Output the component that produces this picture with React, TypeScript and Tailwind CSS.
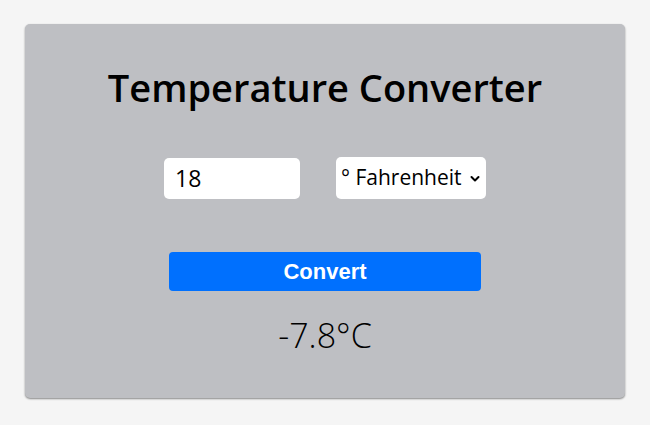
import React, {useState} from "react";

export default function App() {
    const [value, setValue] = useState<string>("18");
    const [unit, setUnit] = useState<string>("F");

    return (
        <div className="min-h-[425px] w-full bg-[#f5f5f5] pt-[24px] px-[25px] font-['Open_Sans',sans-serif]">
            <div className="w-[600px] h-[374px] bg-[#bebfc3] rounded-[5px] shadow-[0_1px_2px_rgba(0,0,0,0.45)] flex flex-col items-center pt-[38px]">
                <h1 className="text-[38px] font-semibold text-black leading-[50px]">Temperature Converter</h1>
                <div className="flex flex-row items-center gap-[36px] mt-[45px]">
                    <input
                        type="text"
                        value={value}
                        onChange={e => setValue(e.target.value)}
                        className="w-[136px] h-[41px] bg-white rounded-[5px] px-[11px] text-[23px] text-black outline-none"
                    />
                    <div className="relative w-[150px] h-[42px] bg-white rounded-[5px]">
                        <select
                            value={unit}
                            onChange={e => setUnit(e.target.value)}
                            className="appearance-none w-full h-full bg-transparent pl-[5px] pr-[18px] text-[21px] text-black outline-none"
                        >
                            <option value="F">° Fahrenheit</option>
                            <option value="C">° Celsius</option>
                        </select>
                        <svg className="absolute right-[6px] top-[18px] pointer-events-none" width="10" height="8" viewBox="0 0 10 8">
                            <path d="M1.5 2 L5 5.5 L8.5 2" fill="none" stroke="black" strokeWidth="2" strokeLinecap="round" strokeLinejoin="round"/>
                        </svg>
                    </div>
                </div>
                <button className="mt-[53px] w-[312px] h-[39px] bg-[#0070fe] rounded-[4px] text-white text-[22px] font-bold font-['Liberation_Sans',Arial,sans-serif]">
                    Convert
                </button>
                <div className="mt-[22px] text-[34px] font-light text-black leading-[44px]">-7.8°C</div>
            </div>
        </div>
    );
}
